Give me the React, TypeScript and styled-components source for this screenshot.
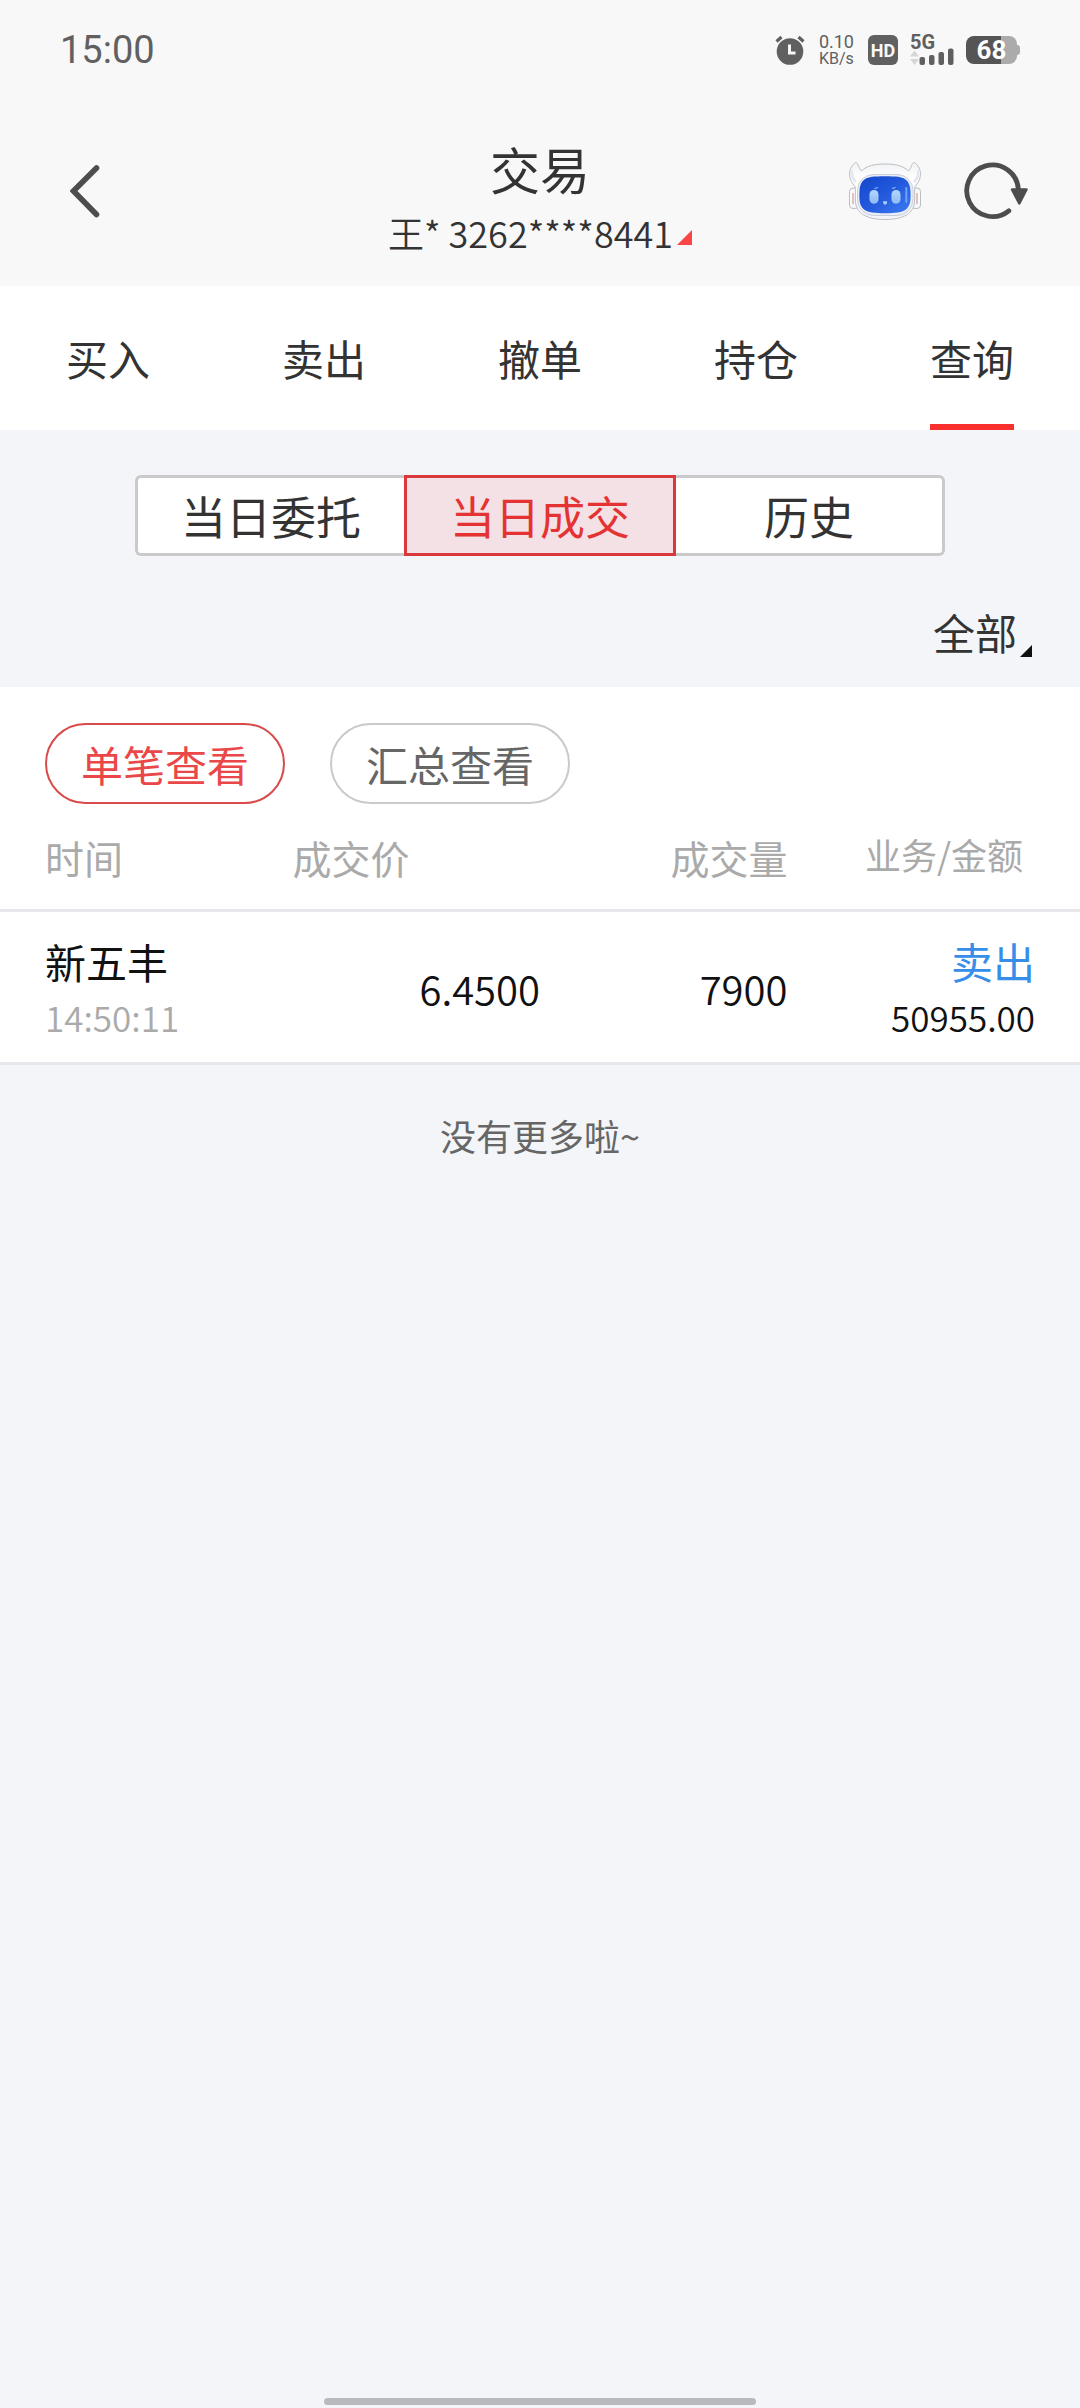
import React from "react";
import styled, { createGlobalStyle } from "styled-components";

const GlobalStyle = createGlobalStyle`
  * { box-sizing: border-box; }
  body {
    margin: 0;
    background: #f3f5f9;
    color: #333;
    font-family: "Noto Sans CJK SC", "Noto Sans", sans-serif;
  }
  button, select {
    margin: 0;
    padding: 0;
    border: 0;
    background: none;
    color: inherit;
    font: inherit;
  }
`;

const Page = styled.div`
  display: flex;
  flex-direction: column;
  min-height: 100vh;
`;

/* ---------- status bar ---------- */

const StatusBar = styled.div`
  display: flex;
  align-items: center;
  justify-content: space-between;
  height: 96px;
  padding: 4px 60px 0;
  background: #f8f8f8;
  color: #606060;
  font-family: Roboto, sans-serif;
`;

const Clock = styled.time`
  font-size: 38px;
  line-height: 44px;
`;

const StatusIcons = styled.div`
  display: flex;
  align-items: center;
  gap: 12px;
`;

const NetSpeed = styled.div`
  display: flex;
  flex-direction: column;
  align-items: center;
  padding: 0 2px;
  font-size: 18px;
  line-height: 17px;
`;

const NetUnit = styled.span`
  font-size: 16px;
`;

const HdBadge = styled.span`
  display: grid;
  place-items: center;
  width: 30px;
  height: 30px;
  border-radius: 6px;
  background: #606060;
  color: #f8f8f8;
  font-size: 18px;
  font-weight: 700;
`;

const Signal = styled.div`
  position: relative;
  display: flex;
`;

const Network = styled.span`
  position: absolute;
  top: 0;
  left: 0;
  font-size: 20px;
  font-weight: 700;
  line-height: 15px;
`;

const Battery = styled.div`
  display: flex;
  align-items: center;
`;

const BatteryBody = styled.span`
  display: grid;
  place-items: center;
  width: 51px;
  height: 28px;
  border-radius: 8px;
  background: linear-gradient(to right, #555 68%, #ababab 68%);
  color: #fff;
  font-size: 26px;
  font-weight: 700;
  line-height: 28px;
`;

const BatteryCap = styled.span`
  width: 3px;
  height: 10px;
  border-radius: 0 3px 3px 0;
  background: #ababab;
`;

/* ---------- title bar ---------- */

const TitleBar = styled.header`
  display: grid;
  grid-template-columns: 1fr auto 1fr;
  align-items: center;
  height: 190px;
  padding: 0 52px;
  background: #f8f8f8;
`;

const TitleBlock = styled.div`
  display: flex;
  flex-direction: column;
  align-items: center;
  padding-top: 10px;
`;

const Title = styled.h1`
  margin: 0;
  font-size: 50px;
  font-weight: 400;
  line-height: 72px;
`;

const Picker = styled.label<{ $size: number; $gap: number }>`
  display: flex;
  align-items: center;
  gap: ${(p) => p.$gap}px;
  font-size: ${(p) => p.$size}px;
  line-height: 60px;
`;

const AccountPicker = styled(Picker)`
  height: 56px;
`;

const Select = styled.select<{ $light?: boolean }>`
  appearance: none;
  height: 60px;
  outline: none;
  font-weight: ${(p) => (p.$light ? 350 : 400)};
`;

const Corner = styled.svg<{ $drop: number }>`
  margin-top: ${(p) => p.$drop}px;
`;

const IconButton = styled.button`
  display: flex;
`;

const BackButton = styled(IconButton)`
  justify-self: start;
  padding: 0 18px;
`;

const Actions = styled.div`
  display: flex;
  align-items: center;
  justify-content: flex-end;
  gap: 43px;
`;

/* ---------- tabs ---------- */

const Tabs = styled.nav`
  display: flex;
  height: 144px;
  background: #fff;
`;

const Tab = styled.button<{ $active: boolean }>`
  display: flex;
  flex: 1;
  justify-content: center;
  font-size: 42px;

  span {
    display: flex;
    align-items: center;
    height: 144px;
    border-top: 4px solid transparent;
    border-bottom: 6px solid ${(p) => (p.$active ? "#fa302f" : "transparent")};
  }
`;

/* ---------- filters ---------- */

const Filters = styled.section`
  padding-top: 45px;
`;

const Segments = styled.div`
  display: flex;
  width: 75%;
  margin: 0 auto;
`;

const Segment = styled.button<{ $active: boolean }>`
  flex: 1;
  height: 81px;
  border: 3px solid ${(p) => (p.$active ? "#d9393b" : "#cacaca")};
  background: ${(p) => (p.$active ? "#f3e1e5" : "#fff")};
  color: ${(p) => (p.$active ? "#e53333" : "#333")};
  font-size: 45px;
  line-height: 60px;

  &:first-child { border-right: 0; border-radius: 6px 0 0 6px; }
  &:last-child { border-left: 0; border-radius: 0 6px 6px 0; }
`;

const RangeRow = styled.div`
  display: flex;
  align-items: flex-start;
  justify-content: flex-end;
  height: 131px;
  padding: 46px 48px 0;
`;

/* ---------- trades ---------- */

const Panel = styled.section`
  background: #fff;
`;

const Pills = styled.div`
  display: flex;
  gap: 45px;
  padding: 36px 45px 0;
`;

const Pill = styled.button<{ $active: boolean }>`
  width: 240px;
  height: 81px;
  border: 2px solid ${(p) => (p.$active ? "#d94a4a" : "#cacaca")};
  border-radius: 41px;
  color: ${(p) => (p.$active ? "#ea4848" : "#666")};
  font-size: 42px;
  line-height: 60px;
`;

const Table = styled.table`
  display: block;

  thead, tbody { display: block; }
`;

const Row = styled.tr<{ $height: number }>`
  display: grid;
  grid-template-columns: repeat(4, 1fr);
  align-items: center;
  height: ${(p) => p.$height}px;
  padding: 0 45px;
  border-bottom: 3px solid #e6e6eb;
`;

const HeadCell = styled.th<{ $right?: boolean }>`
  padding: 0;
  color: #aaa;
  font-size: 39px;
  font-weight: 400;
  line-height: 54px;
  text-align: ${(p) => (p.$right ? "right" : "left")};
`;

const AmountHead = styled(HeadCell)`
  padding: 0 12px 6px 0;
  font-size: 36px;
`;

const Cell = styled.td<{ $right?: boolean }>`
  padding: 2px 0 0;
  color: #111;
  font-size: 40px;
  font-weight: 350;
  line-height: 56px;
  text-align: ${(p) => (p.$right ? "right" : "left")};
`;

const StackCell = styled(Cell)`
  padding: 4px 0 0;
`;

const Main = styled.div<{ $sell?: boolean }>`
  color: ${(p) => (p.$sell ? "#368ee9" : "#111")};
  font-size: ${(p) => (p.$sell ? 42 : 41)}px;
  font-weight: 400;
`;

const Sub = styled.div<{ $muted?: boolean }>`
  color: ${(p) => (p.$muted ? "#aaa" : "#111")};
  font-size: 35px;
`;

const Empty = styled.p`
  margin: 0;
  padding: 44px 0;
  color: #666;
  font-size: 36px;
  line-height: 52px;
  text-align: center;
`;

const HomeBar = styled.div`
  width: 40%;
  height: 7px;
  margin: auto auto 3px;
  border-radius: 4px;
  background: #b9babd;
`;

/* ---------- drawings ---------- */

const AlarmIcon = () => (
  <svg width="30" height="30" viewBox="0 0 30 30" aria-hidden="true">
    <circle cx="15" cy="16.500" r="13.300" fill="#606060" />
    <path d="M1.500 6.500 6.500 2M28.500 6.500 23.500 2" stroke="#606060" strokeWidth="3.200" />
    <path d="M14.500 9.500V18H20.500" fill="none" stroke="#f8f8f8" strokeWidth="3" />
  </svg>
);

const SignalIcon = () => (
  <svg width="44" height="30" viewBox="0 0 44 30" aria-hidden="true">
    <path d="M4.500 15.500 9 21.500H0ZM4.500 30 9 24H0Z" fill="#d6d6d6" />
    <g fill="#606060">
      <rect x="9.500" y="22" width="5.500" height="8" rx="2" />
      <rect x="19" y="20" width="5.500" height="10" rx="2" />
      <rect x="28.500" y="17" width="5.500" height="13" rx="2" />
      <rect x="38" y="13.500" width="5.500" height="16.500" rx="2" />
    </g>
  </svg>
);

const BackIcon = () => (
  <svg width="30" height="54" viewBox="0 0 30 54" aria-hidden="true">
    <path
      d="M26.500 4 3.500 27 26.500 50.500"
      fill="none"
      stroke="#4d4d4d"
      strokeWidth="5.600"
      strokeLinecap="round"
      strokeLinejoin="miter"
    />
  </svg>
);

const RobotIcon = () => (
  <svg width="72" height="58" viewBox="0 0 72 58" aria-hidden="true">
    <defs>
      <linearGradient id="shell" x1="0" y1="0" x2="0" y2="1">
        <stop offset="0" stopColor="#f1f2f4" />
        <stop offset="0.3" stopColor="#ffffff" />
        <stop offset="1" stopColor="#f3f5f9" />
      </linearGradient>
      <linearGradient id="screen" x1="0" y1="0" x2="1" y2="1">
        <stop offset="0" stopColor="#1447cc" />
        <stop offset="0.5" stopColor="#2359dc" />
        <stop offset="1" stopColor="#3f7cf2" />
      </linearGradient>
      <linearGradient id="eye" x1="0" y1="0" x2="0" y2="1">
        <stop offset="0" stopColor="#b4d8fa" />
        <stop offset="1" stopColor="#8fb9f5" />
      </linearGradient>
    </defs>
    <g fill="url(#shell)" stroke="#bcbec3" strokeWidth="1">
      <rect x="0.500" y="26" width="9" height="20.500" rx="3.500" />
      <rect x="62.500" y="26" width="9" height="20.500" rx="3.500" />
      <path d="M6.500.5C2 4 .5 8 .5 12c0 6 3 9 5.500 12.500C7 28 5.800 33 6.500 40 7.500 51 17 57.500 36 57.500S64.500 51 65.500 40c.7-7-.5-12 .5-15.500C68.500 21 71.500 18 71.500 12 71.500 8 70 4 65.500.5c-3 0-3 6-6 8.500C54 3.500 46 2 36 2S18 3.500 12.500 9c-3-2.500-3-8.500-6-8.500Z" />
    </g>
    <path d="M4 31v11M68 31v11" stroke="#dba79f" strokeWidth="1.400" />
    <path d="M3 8c-1 5 1 9 4 12M69 8c1 5-1 9-4 12" fill="none" stroke="#e3e7ef" strokeWidth="2.500" />
    <rect x="8.500" y="12.500" width="55.500" height="41" rx="16" fill="#e9edf6" stroke="#c9cedb" strokeWidth="1" />
    <path d="M23 14.800C29 14 43 14 49 14.800 58 16 61 21 61.500 29c.5 9 0 14-4 18-4 3.500-12 4.300-21.500 4.300S18.500 50.500 14.500 47c-4-4-4.500-9-4-18 .5-8 3.500-13 12.500-14.200Z" fill="url(#screen)" />
    <rect x="20.500" y="28" width="9" height="13.800" rx="4.500" fill="url(#eye)" />
    <rect x="42.500" y="28" width="9" height="13.800" rx="4.500" fill="url(#eye)" />
    <path d="M25.500 26.500 29 25.500M43 26.500 46.500 25.500" stroke="#8fbdf8" strokeWidth="1.300" />
    <path d="M34 39.200h4.200c0 2-.8 3.600-2.100 3.600S34 41.200 34 39.200Z" fill="#a5cbfa" />
    <path d="M57.300 26v14" stroke="#6fa2f8" strokeWidth="2" strokeLinecap="round" />
  </svg>
);

const RefreshIcon = () => (
  <svg width="64" height="58" viewBox="0 0 64 58" aria-hidden="true">
    <path
      d="M54.300 27A25.800 25.800 0 1 0 44.800 48.800"
      fill="none"
      stroke="#4d4d4d"
      strokeWidth="4.800"
      strokeLinecap="round"
    />
    <path
      d="M48 27.500H62.500L55.300 41.500Z"
      fill="#4d4d4d"
      stroke="#4d4d4d"
      strokeWidth="2.500"
      strokeLinejoin="round"
    />
  </svg>
);

const CornerMark = ({ size, color, drop }: { size: number; color: string; drop: number }) => (
  <Corner $drop={drop} width={size} height={size} viewBox="0 0 10 10" aria-hidden="true">
    <path d="M10 0V10H0Z" fill={color} />
  </Corner>
);

/* ---------- data ---------- */

const tabs = ["买入", "卖出", "撤单", "持仓", "查询"];
const segments = ["当日委托", "当日成交", "历史"];
const views = ["单笔查看", "汇总查看"];
const trades = [
  { name: "新五丰", time: "14:50:11", price: "6.4500", volume: "7900", side: "卖出", amount: "50955.00" },
];

export default function App() {
  const [tab, setTab] = React.useState("查询");
  const [segment, setSegment] = React.useState("当日成交");
  const [view, setView] = React.useState("单笔查看");

  return (
    <Page>
      <GlobalStyle />
      <StatusBar>
        <Clock>15:00</Clock>
        <StatusIcons>
          <AlarmIcon />
          <NetSpeed>
            <span>0.10</span>
            <NetUnit>KB/s</NetUnit>
          </NetSpeed>
          <HdBadge>HD</HdBadge>
          <Signal>
            <Network>5G</Network>
            <SignalIcon />
          </Signal>
          <Battery>
            <BatteryBody>68</BatteryBody>
            <BatteryCap />
          </Battery>
        </StatusIcons>
      </StatusBar>

      <TitleBar>
        <BackButton aria-label="返回">
          <BackIcon />
        </BackButton>
        <TitleBlock>
          <Title>交易</Title>
          <AccountPicker $size={36} $gap={4}>
            <Select $light aria-label="账户">
              <option>王* 3262****8441</option>
            </Select>
            <CornerMark size={15} color="#fa4646" drop={10} />
          </AccountPicker>
        </TitleBlock>
        <Actions>
          <IconButton aria-label="智能助手">
            <RobotIcon />
          </IconButton>
          <IconButton aria-label="刷新">
            <RefreshIcon />
          </IconButton>
        </Actions>
      </TitleBar>

      <Tabs>
        {tabs.map((t) => (
          <Tab key={t} $active={t === tab} onClick={() => setTab(t)}>
            <span>{t}</span>
          </Tab>
        ))}
      </Tabs>

      <Filters>
        <Segments>
          {segments.map((s) => (
            <Segment key={s} $active={s === segment} onClick={() => setSegment(s)}>
              {s}
            </Segment>
          ))}
        </Segments>
        <RangeRow>
          <Picker $size={42} $gap={2}>
            <Select aria-label="范围">
              <option>全部</option>
            </Select>
            <CornerMark size={12} color="#111" drop={38} />
          </Picker>
        </RangeRow>
      </Filters>

      <Panel>
        <Pills>
          {views.map((v) => (
            <Pill key={v} $active={v === view} onClick={() => setView(v)}>
              {v}
            </Pill>
          ))}
        </Pills>
        <Table>
          <thead>
            <Row $height={108}>
              <HeadCell>时间</HeadCell>
              <HeadCell>成交价</HeadCell>
              <HeadCell $right>成交量</HeadCell>
              <AmountHead $right>业务/金额</AmountHead>
            </Row>
          </thead>
          <tbody>
            {trades.map((t) => (
              <Row key={t.time} $height={153}>
                <StackCell>
                  <Main>{t.name}</Main>
                  <Sub $muted>{t.time}</Sub>
                </StackCell>
                <Cell $right>{t.price}</Cell>
                <Cell $right>{t.volume}</Cell>
                <StackCell $right>
                  <Main $sell>{t.side}</Main>
                  <Sub>{t.amount}</Sub>
                </StackCell>
              </Row>
            ))}
          </tbody>
        </Table>
      </Panel>

      <Empty>没有更多啦~</Empty>
      <HomeBar />
    </Page>
  );
}
